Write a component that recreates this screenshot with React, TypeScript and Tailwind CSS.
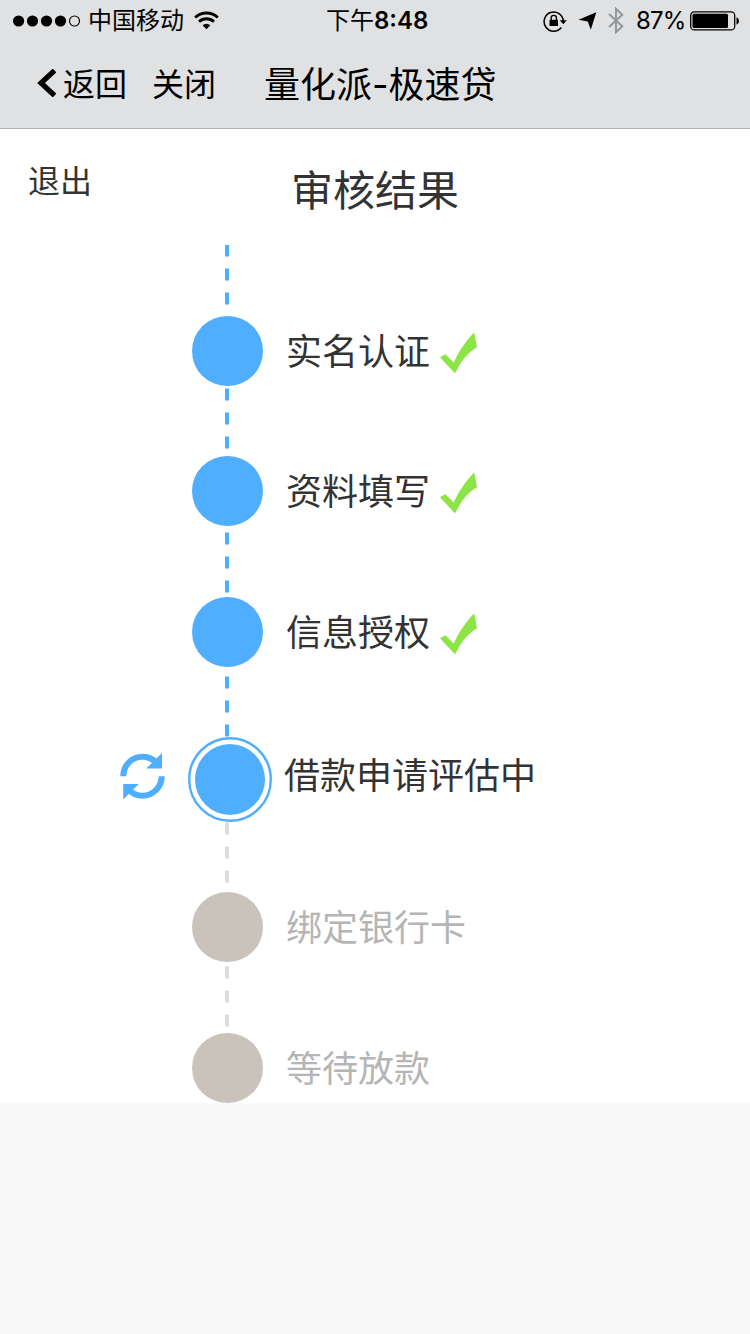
import React from "react";

type StepState = "done" | "active" | "pending";

interface Step {
  label: string;
  state: StepState;
  connector: string;
}

const steps: Step[] = [
  { label: "实名认证", state: "done", connector: "h-[71px]" },
  { label: "资料填写", state: "done", connector: "h-[70px] pt-[2px]" },
  { label: "信息授权", state: "done", connector: "h-[71px] pt-[6px]" },
  { label: "借款申请评估中", state: "active", connector: "h-[70px] pt-[9px]" },
  { label: "绑定银行卡", state: "pending", connector: "h-[70px]" },
  { label: "等待放款", state: "pending", connector: "h-[71px] pt-[4px]" },
];

function Connector({ pending, first, className }: { pending: boolean; first: boolean; className: string }) {
  const tone = pending ? "border-[#ededed] bg-[#dcdcdc]" : "border-[#a8d6ff] bg-[#50aeff]";
  return (
    <div className={`ml-[225px] flex w-1 flex-col gap-[11px] overflow-hidden ${className}`}>
      {[0, 1, 2].map((i) => (
        <div
          key={i}
          className={`w-1 shrink-0 ${tone} ${first && i === 0 ? "h-3 border-b" : "h-[13px] border-y"}`}
        />
      ))}
    </div>
  );
}

function CheckMark() {
  return (
    <svg className="mt-[4px] ml-[9px] h-[42px] w-[40px]" viewBox="0 0 40 42">
      <path
        d="M1 25.2 L6.3 22.2 L14.8 30.6 C19 20.5 26.5 9.5 34.6 1 L35.4 1.2 L38 15.2 C28.5 20.5 21.5 29.5 16.8 40.6 L15.4 40.8 Z"
        fill="#8ce445"
      />
    </svg>
  );
}

function RefreshIcon() {
  return (
    <svg className="-mt-[7px] ml-[120px] h-[47px] w-[45px] shrink-0" viewBox="0 0 45 47">
      <g fill="none" stroke="#50aeff" strokeWidth="6">
        <path d="M3.3 23.2 A19.2 19.2 0 0 1 36 9.2" />
        <path d="M41.7 23.2 A19.2 19.2 0 0 1 9 37.2" />
      </g>
      <path d="M42 0 V15.5 H26.3 Z M3.2 46.4 V31 H18.8 Z" fill="#50aeff" />
    </svg>
  );
}

function ActiveNode() {
  return (
    <svg className="ml-[23px] h-[85px] w-[84px] shrink-0" viewBox="0 0 84 85">
      <ellipse cx="42" cy="42.5" rx="40.8" ry="41.3" fill="none" stroke="#50aeff" strokeWidth="2.4" />
      <ellipse cx="42" cy="42.5" rx="35" ry="35.5" fill="#50aeff" />
    </svg>
  );
}

function StepRow({ step }: { step: Step }) {
  if (step.state === "active") {
    return (
      <div className="flex h-[85px] items-center">
        <RefreshIcon />
        <ActiveNode />
        <span className="-mt-[7px] ml-[12px] text-4xl leading-[50px] text-[#333]">{step.label}</span>
      </div>
    );
  }
  const pending = step.state === "pending";
  return (
    <div className="flex h-[70px] items-center">
      <div className={`ml-[192px] h-[70px] w-[71px] shrink-0 rounded-full ${pending ? "bg-[#cac3bc]" : "bg-[#50aeff]"}`} />
      <span className={`mt-[2px] ml-[23px] text-4xl leading-[50px] ${pending ? "text-[#b5b5b5]" : "text-[#333]"}`}>
        {step.label}
      </span>
      {!pending && <CheckMark />}
    </div>
  );
}

function StatusBar() {
  return (
    <div className="grid h-[42px] grid-cols-[1fr_104px_1fr] items-center text-2xl leading-10">
      <div className="flex items-center pl-[13px]">
        <svg className="-mt-px h-3 w-[68px]" viewBox="0 0 68 12">
          <circle cx="5.6" cy="6" r="5.6" />
          <circle cx="19.5" cy="6" r="5.6" />
          <circle cx="33.5" cy="6" r="5.6" />
          <circle cx="47.5" cy="6" r="5.6" />
          <circle cx="61.5" cy="6" r="5" fill="none" stroke="#000" strokeWidth="1.1" />
        </svg>
        <span className="ml-[7px]">中国移动</span>
        <svg className="-mt-[2px] ml-[10px] h-[19px] w-[25px]" viewBox="0 0 25 19">
          <g fill="none" stroke="#000" strokeWidth="2.8">
            <path d="M1.2 6.5 A16.5 16.5 0 0 1 23.8 6.5" />
            <path d="M5 10.7 A11 11 0 0 1 20 10.7" />
          </g>
          <path d="M8.6 14.3 A5.8 5.8 0 0 1 16.4 14.3 L12.5 18.2 Z" />
        </svg>
      </div>
      <div className="flex pl-[3px] whitespace-nowrap">
        <span>下午</span>
        <span className="font-semibold">8:48</span>
      </div>
      <div className="flex items-center justify-end pr-[10px]">
        <svg className="-mt-px h-[22px] w-[24px]" viewBox="0 0 24 22">
          <path d="M18.3 17.5 A9.6 9.6 0 1 1 20.3 11" fill="none" stroke="#000" strokeWidth="1.5" />
          <path d="M16.8 10.3 H23.8 L20.3 14.3 Z" />
          <path d="M6.5 9.8 H15 V16 H6.5 Z" />
          <path d="M8.2 10 V8 A2.6 2.6 0 0 1 13.4 8 V10" fill="none" stroke="#000" strokeWidth="1.4" />
        </svg>
        <svg className="-mt-px ml-[11px] h-[18px] w-[19px]" viewBox="0 0 19 18">
          <path d="M18.3 .3 L12.8 17.8 L9.8 9.6 L.5 7.8 Z" />
        </svg>
        <svg className="-mt-px ml-[11px] h-[27px] w-[16px]" viewBox="0 0 16 27">
          <path d="M1 7 L14.3 19.3 L8 25.3 V1.7 L14.3 7.7 L1 20" fill="none" stroke="#929394" strokeWidth="1.9" />
        </svg>
        <span className="ml-[12px] w-[48px] whitespace-nowrap tracking-[-0.8px]">87%</span>
        <svg className="-mt-px ml-[6px] h-[20px] w-[50px]" viewBox="0 0 50 20">
          <rect x=".7" y=".9" width="44" height="18" rx="3.5" fill="none" stroke="#000" strokeWidth="1.3" />
          <rect x="2.5" y="2.7" width="35.5" height="14.4" rx="1.5" />
          <path d="M46.5 6.2 Q49 7 49 10 Q49 13 46.5 13.8 Z" />
        </svg>
      </div>
    </div>
  );
}

export default function App() {
  return (
    <div className="flex h-[1334px] w-[750px] flex-col overflow-hidden bg-[#f9f9f9] font-['Inter','Noto_Sans_CJK_SC',sans-serif]">
      <header className="h-[129px] border-b border-[#b2b2b2] bg-[#e0e1e3] text-black">
        <StatusBar />
        <nav className="flex h-[86px] items-center text-[32px] leading-[48px]">
          <svg className="-mt-[4px] ml-[37px] h-[28px] w-[19px]" viewBox="0 0 19 28">
            <path d="M17.5 1.5 L4 14 L17.5 26.5" fill="none" stroke="#000" strokeWidth="5.2" />
          </svg>
          <span className="ml-[7px]">返回</span>
          <span className="ml-[25px]">关闭</span>
          <h1 className="ml-[48px] text-4xl leading-[48px]">量化派-极速贷</h1>
        </nav>
      </header>
      <main className="flex h-[974px] flex-col bg-white">
        <div className="grid h-[116px] shrink-0 grid-cols-[1fr_168px_1fr] text-[#333]">
          <button className="mt-[29px] ml-[28px] h-[48px] justify-self-start text-[32px] leading-[48px]">退出</button>
          <h2 className="mt-[32px] text-[42px] leading-[60px]">审核结果</h2>
        </div>
        {steps.map((step, i) => (
          <React.Fragment key={step.label}>
            <Connector pending={step.state === "pending"} first={i === 0} className={step.connector} />
            <StepRow step={step} />
          </React.Fragment>
        ))}
      </main>
    </div>
  );
}
